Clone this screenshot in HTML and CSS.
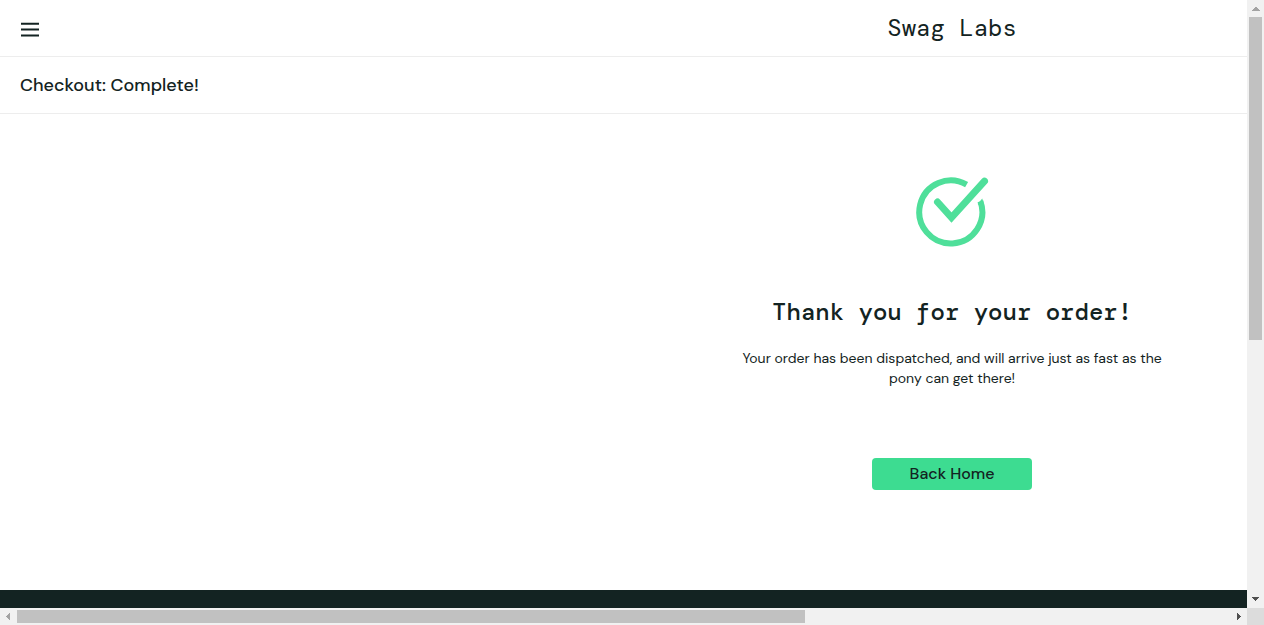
FILE: index.html
```html
<!DOCTYPE html>
<html lang="en">
<head>
<meta charset="utf-8">
<title>Swag Labs</title>
<link rel="stylesheet" href="styles.css">
</head>
<body>
<div class="window">
  <div class="viewport">
    <div class="page">
      <header class="header">
        <button class="menu-button" type="button" aria-label="Open Menu">
          <svg width="20" height="16" viewBox="0 0 20 16" fill="none" stroke="#132322" stroke-width="2" aria-hidden="true"><path d="M1 1.7H19M1 7.6H19M1 13.5H19"/></svg>
        </button>
        <div class="app-logo">Swag Labs</div>
      </header>
      <div class="subheader"><span class="title">Checkout: Complete!</span></div>
      <main class="complete">
        <svg class="pony" width="74" height="70" viewBox="-0.5 0 74 70" fill="none" stroke="#4fdf9a" role="img" aria-label="Order complete">
          <path d="M51.1 7.7A31.5 31.5 0 1 0 64.9 24.2" stroke-width="6"/>
          <path d="M62.2 27L66.7 21.4L68 25.5L63.5 28Z" fill="#4fdf9a" stroke="none"/>
          <path d="M22 25L36 40.500L69 4.200" stroke-width="7" stroke-linecap="round" stroke-linejoin="miter"/>
        </svg>
        <h2 class="complete-header">Thank you for your order!</h2>
        <p class="complete-text">Your order has been dispatched, and will arrive just as fast as the pony can get there!</p>
        <button class="back-button" type="button">Back Home</button>
      </main>
      <footer class="footer"></footer>
    </div>
  </div>
  <div class="scrollbar vertical" aria-hidden="true">
    <svg width="17" height="17" shape-rendering="crispEdges"><path d="M8 7h2v1h1v1h1v1h1v1H5v-1h1V9h1V8h1z" fill="#a3a3a3"/></svg>
    <div class="track"><div class="thumb"></div></div>
    <svg width="17" height="17" shape-rendering="crispEdges"><path d="M5 6h7v1h-1v1h-1v1H9v1H8V9H7V8H6V7H5z" fill="#505050"/></svg>
  </div>
  <div class="scrollbar horizontal" aria-hidden="true">
    <svg width="17" height="17" shape-rendering="crispEdges"><path d="M10 5v7H9v-1H8v-1H7V9H6V8h1V7h1V6h1V5z" fill="#a3a3a3"/></svg>
    <div class="track"><div class="thumb"></div></div>
    <svg width="17" height="17" shape-rendering="crispEdges"><path d="M7 5v7h1v-1h1v-1h1V9h1V8h-1V7H9V6H8V5z" fill="#505050"/></svg>
  </div>
  <div class="corner"></div>
</div>
</body>
</html>
```
FILE: styles.css
```css
* { box-sizing: border-box; }

body {
  margin: 0;
  background: #fff;
  color: #132322;
  font-family: "DM Sans", Inter, "Open Sans", sans-serif;
}

.window {
  display: grid;
  grid-template: minmax(0, 1fr) 17px / minmax(0, 1fr) 17px;
  height: 100vh;
}

.viewport { overflow: hidden; }

.page {
  display: flex;
  flex-direction: column;
  width: 152.7%;
}

.header,
.subheader {
  display: grid;
  align-items: center;
  height: 57px;
  padding: 0 20px;
  border-bottom: 1px solid #ededed;
}

.header { grid-template-columns: 1fr auto 1fr; }

.menu-button {
  display: flex;
  justify-self: start;
  padding: 4px 0 0;
  border: 0;
  background: none;
}

.app-logo {
  font: 24px/32px "DM Mono", "Liberation Mono", monospace;
}

.title {
  font-size: 18px;
  line-height: 24px;
  font-weight: 500;
}

.complete {
  display: flex;
  flex-direction: column;
  align-items: center;
  padding: 63px 20px 100px;
}

.complete-header {
  margin: 49px 0 0;
  font: 500 24px/32px "DM Mono", "DejaVu Sans Mono", monospace;
}

.complete-text {
  max-width: 440px;
  margin: 20px 0 70px;
  font-size: 14px;
  line-height: 20px;
  text-align: center;
}

.back-button {
  width: 160px;
  height: 32px;
  padding: 0;
  border: 0;
  border-radius: 4px;
  background: #3ddc91;
  color: #132322;
  font: 500 16px/20px "DM Sans", Inter, sans-serif;
}

.footer {
  height: 120px;
  background: #132322;
}

.scrollbar {
  display: flex;
  background: #f1f1f1;
}

.scrollbar svg { flex: none; }
.vertical { flex-direction: column; }
.track { flex: 1; }
.thumb { background: #c1c1c1; }

.vertical .thumb {
  width: 13px;
  height: 56.3%;
  margin: 0 2px;
}

.horizontal .track { padding: 2px 0; }

.horizontal .thumb {
  width: 65%;
  height: 13px;
}

.corner { background: #dcdcdc; }
```
